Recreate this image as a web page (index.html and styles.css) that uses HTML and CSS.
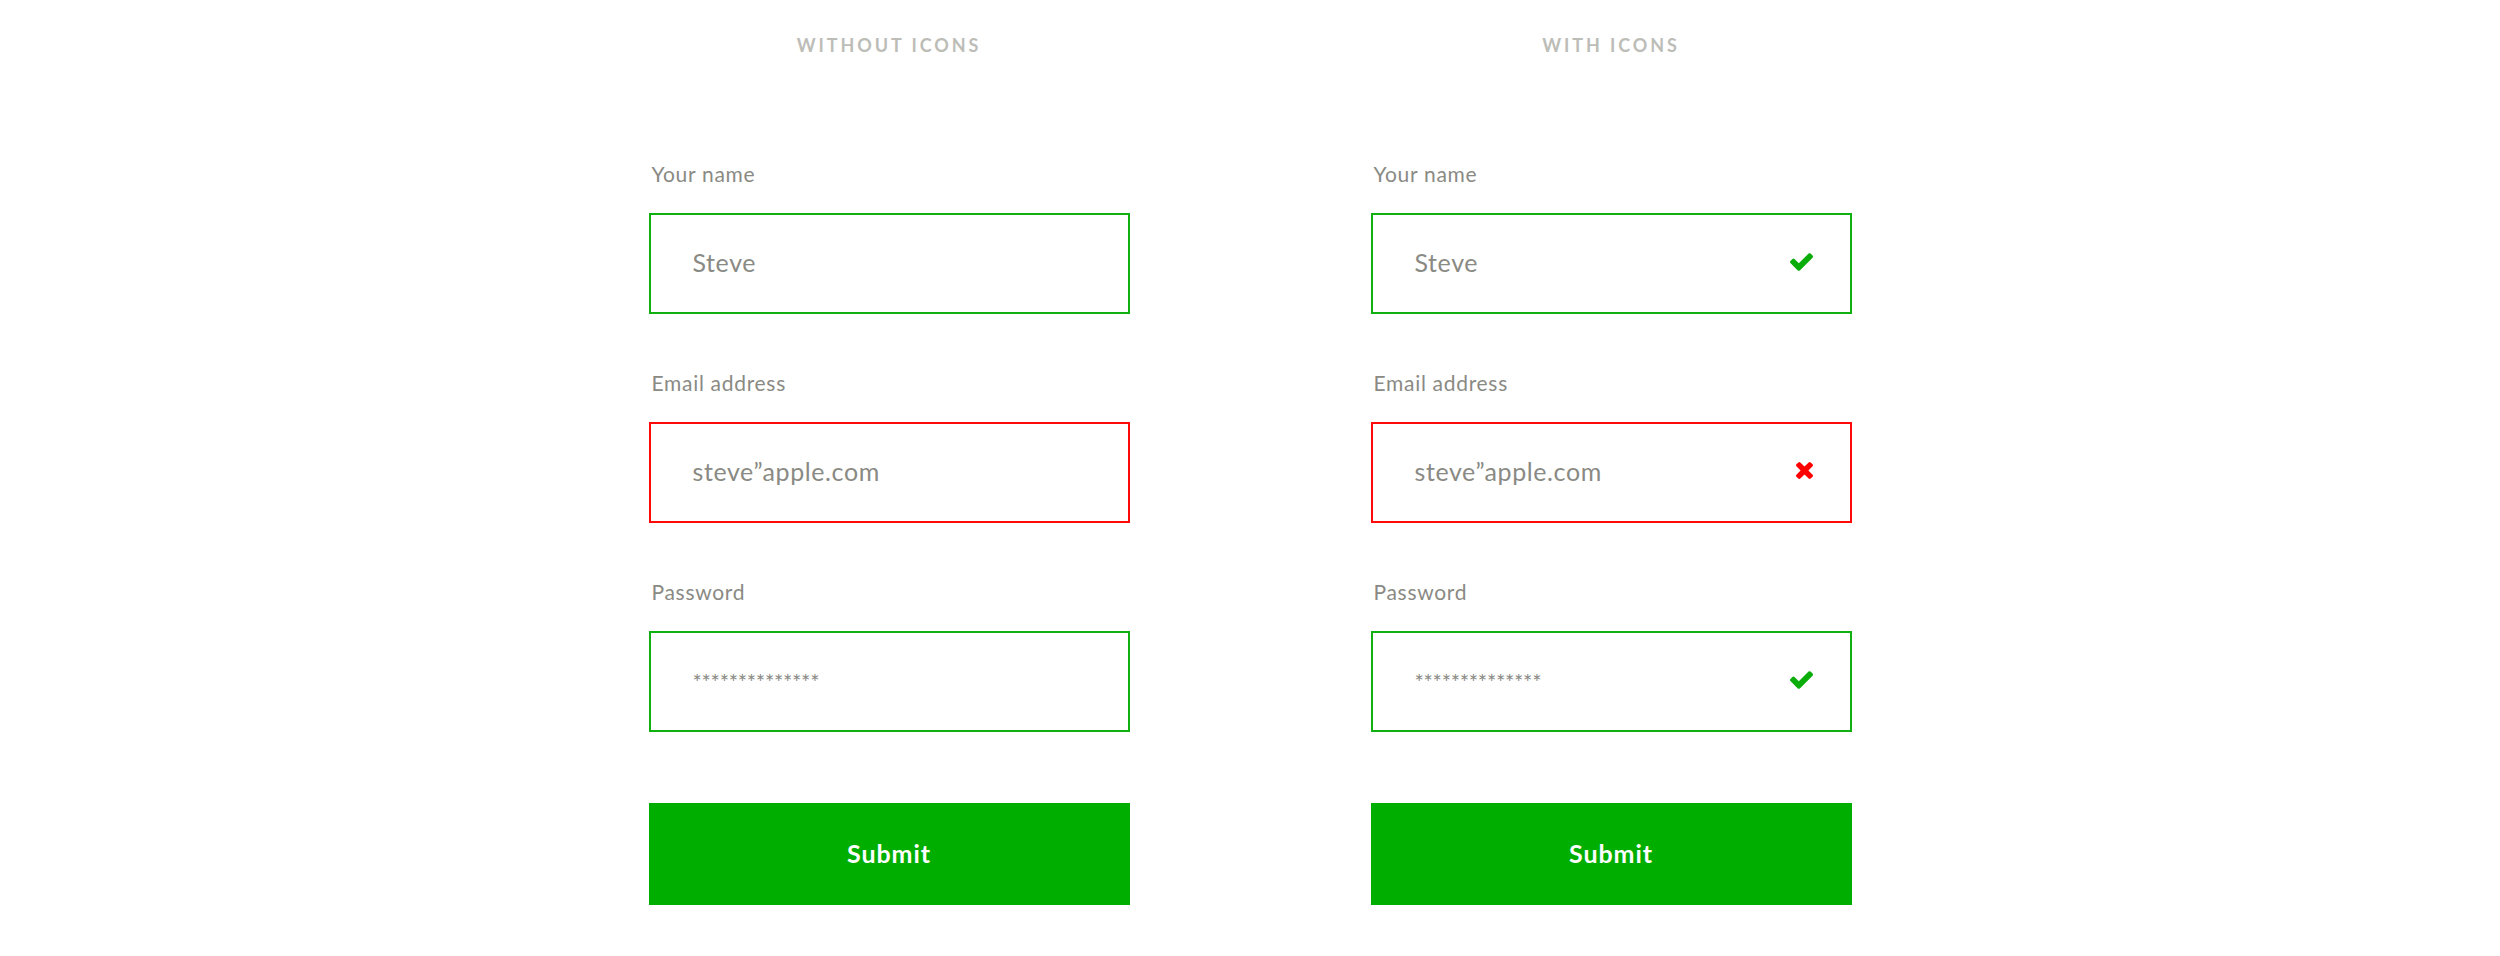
FILE: index.html
```html
<!DOCTYPE html>
<html lang="en">
<head>
<meta charset="utf-8">
<title>Form validation</title>
<link rel="stylesheet" href="styles.css">
</head>
<body>
<div class="page">
  <section class="col">
    <h2 class="heading">WITHOUT ICONS</h2>
    <div class="field">
      <div class="label">Your name</div>
      <div class="box valid"><span class="value">Steve</span></div>
    </div>
    <div class="field">
      <div class="label">Email address</div>
      <div class="box invalid"><span class="value">steve”apple.com</span></div>
    </div>
    <div class="field">
      <div class="label">Password</div>
      <div class="box valid"><span class="value pass">**************</span></div>
    </div>
    <button class="submit">Submit</button>
  </section>
  <section class="col">
    <h2 class="heading">WITH ICONS</h2>
    <div class="field">
      <div class="label">Your name</div>
      <div class="box valid"><span class="value">Steve</span>
        <svg class="icon check" viewBox="121 334 1550 1188"><path d="M1671 566q0 40-28 68l-724 724-136 136q-28 28-68 28t-68-28l-136-136-362-362q-28-28-28-68t28-68l136-136q28-28 68-28t68 28l294 295 656-657q28-28 68-28t68 28l136 136q28 28 28 68z"/></svg>
      </div>
    </div>
    <div class="field">
      <div class="label">Email address</div>
      <div class="box invalid"><span class="value">steve”apple.com</span>
        <svg class="icon cross" viewBox="302 366 1188 1188"><path d="M1490 1322q0 40-28 68l-136 136q-28 28-68 28t-68-28l-294-294-294 294q-28 28-68 28t-68-28l-136-136q-28-28-28-68t28-68l294-294-294-294q-28-28-28-68t28-68l136-136q28-28 68-28t68 28l294 294 294-294q28-28 68-28t68 28l136 136q28 28 28 68t-28 68l-294 294 294 294q28 28 28 68z"/></svg>
      </div>
    </div>
    <div class="field">
      <div class="label">Password</div>
      <div class="box valid"><span class="value pass">**************</span>
        <svg class="icon check" viewBox="121 334 1550 1188"><path d="M1671 566q0 40-28 68l-724 724-136 136q-28 28-68 28t-68-28l-136-136-362-362q-28-28-28-68t28-68l136-136q28-28 68-28t68 28l294 295 656-657q28-28 68-28t68 28l136 136q28 28 28 68z"/></svg>
      </div>
    </div>
    <button class="submit">Submit</button>
  </section>
</div>
</body>
</html>
```
FILE: styles.css
```css
html, body {
  margin: 0;
  padding: 0;
  background: #ffffff;
}

body {
  font-family: Lato, "Open Sans", "Liberation Sans", sans-serif;
  color: #8a8a84;
}

.page {
  display: flex;
  justify-content: center;
  gap: 241px;
}

.col {
  width: 481px;
  display: flex;
  flex-direction: column;
}

.heading {
  margin: 36px 0 50px;
  font-size: 18px;
  line-height: 18px;
  font-weight: 700;
  letter-spacing: 2.9px;
  text-align: center;
  color: #bdbdb8;
}

.field {
  display: flex;
  flex-direction: column;
  margin-top: 57px;
}

.field:first-of-type {
  margin-top: 58px;
}

.label {
  font-size: 21px;
  line-height: 24px;
  letter-spacing: 0.7px;
  margin: 0 0 27px 3px;
  color: #8a8a84;
}

.box {
  box-sizing: border-box;
  height: 101px;
  border: 2px solid #10b010;
  display: flex;
  align-items: center;
  justify-content: space-between;
  padding: 0 37px 4px 42px;
}

.box.invalid {
  border-color: #ff0a0a;
}

.value {
  font-size: 25px;
  line-height: 30px;
  letter-spacing: 0.6px;
  color: #8a8a84;
}

.value.pass {
  font-size: 22px;
  letter-spacing: -0.3px;
  line-height: 30px;
  padding-top: 4px;
}

.icon {
  display: block;
}

.icon.check {
  width: 23px;
  height: 18px;
  fill: #0aad0a;
}

.icon.cross {
  width: 17px;
  height: 17px;
  fill: #ff0000;
}

.submit {
  margin-top: 71px;
  height: 102px;
  border: 0;
  padding: 0 0 3px;
  background: #00ae00;
  color: #ffffff;
  font-family: Lato, "Open Sans", "Liberation Sans", sans-serif;
  font-size: 25px;
  font-weight: 700;
  letter-spacing: 0.9px;
  cursor: pointer;
}
```
